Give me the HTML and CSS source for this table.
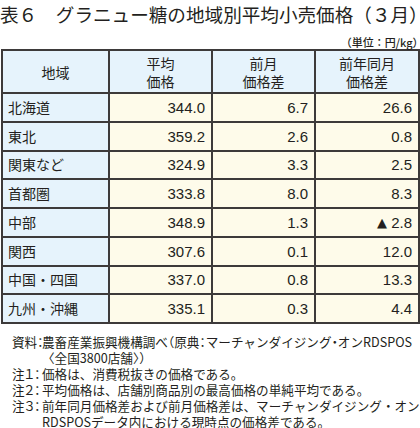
FILE: index.html
```html
<html><head><title>表６ グラニュー糖の地域別平均小売価格</title>
<link rel="stylesheet" href="styles.css">
</head>
<body>
<div class="sheet">
  <h1 class="title">表６　グラニュー糖の地域別平均小売価格（３月<span class="h">）</span></h1>
  <div class="unit"><span class="h">（</span>単位：円/kg<span class="h">）</span></div>
  <table class="prices">
    <colgroup>
      <col class="c-area"><col class="c-num"><col class="c-num"><col class="c-last">
    </colgroup>
    <thead>
      <tr>
        <th>地域</th>
        <th>平均<br>価格</th>
        <th>前月<br>価格差</th>
        <th>前年同月<br>価格差</th>
      </tr>
    </thead>
    <tbody>
      <tr><td class="area">北海道</td><td>344.0</td><td>6.7</td><td>26.6</td></tr>
      <tr><td class="area">東北</td><td>359.2</td><td>2.6</td><td>0.8</td></tr>
      <tr><td class="area">関東など</td><td>324.9</td><td>3.3</td><td>2.5</td></tr>
      <tr><td class="area">首都圏</td><td>333.8</td><td>8.0</td><td>8.3</td></tr>
      <tr><td class="area">中部</td><td>348.9</td><td>1.3</td><td><span class="minus">▲</span> 2.8</td></tr>
      <tr><td class="area">関西</td><td>307.6</td><td>0.1</td><td>12.0</td></tr>
      <tr><td class="area">中国・四国</td><td>337.0</td><td>0.8</td><td>13.3</td></tr>
      <tr><td class="area">九州・沖縄</td><td>335.1</td><td>0.3</td><td>4.4</td></tr>
    </tbody>
  </table>
  <div class="notes">
    <div class="note">
      <span class="label">資料：</span>
      <span class="body">農畜産業振興機構調べ<span class="h">（</span>原典<span class="h">：</span>マーチャンダイジング<span class="h">・</span>オンRDSPOS<br>〈全国3800店舗〉）</span>
    </div>
    <div class="note">
      <span class="label">注１：</span>
      <span class="body">価格は、消費税抜きの価格である。</span>
    </div>
    <div class="note">
      <span class="label">注２：</span>
      <span class="body">平均価格は、店舗別商品別の最高価格の単純平均である。</span>
    </div>
    <div class="note">
      <span class="label">注３：</span>
      <span class="body">前年同月価格差および前月価格差は、マーチャンダイジング・オン<br>RDSPOSデータ内における現時点の価格差である。</span>
    </div>
  </div>
</div>
</body></html>
```

FILE: styles.css
```css
body {
  margin: 0;
  padding: 0;
  background: #fff;
  color: #231f20;
  font-family: 'Noto Sans CJK JP', sans-serif;
}
.sheet {
  width: 420px;
}
.title {
  margin: 3px 0 0 0;
  font-size: 18.6px;
  font-weight: 400;
  line-height: 22px;
  white-space: nowrap;
}
.unit {
  margin-top: 11px;
  padding-right: 2px;
  text-align: right;
  font-size: 11px;
  font-weight: 500;
  line-height: 12px;
  height: 12px;
}
.prices {
  margin-top: 1px;
  margin-left: 1px;
  border-collapse: collapse;
  table-layout: fixed;
  width: 417px;
}
.c-area { width: 107px; }
.c-num { width: 103px; }
.c-last { width: 104px; }
.prices th,
.prices td {
  border: 2px solid #3d3a3a;
  padding: 0 6px;
}
.prices thead tr {
  height: 43px;
}
.prices tbody tr {
  height: 28.75px;
}
.prices th {
  background: #e6f3fc;
  font-weight: 400;
  font-size: 14px;
  line-height: 18px;
  text-align: center;
}
.prices td {
  background: #fefbea;
  text-align: right;
  font-family: 'Liberation Sans', Arial, sans-serif;
  font-size: 15px;
  line-height: 17px;
}
.prices td.area {
  background: #e6f3fc;
  text-align: left;
  font-family: 'Noto Sans CJK JP', sans-serif;
  font-size: 14px;
  padding-left: 5px;
}
.minus {
  font-family: 'DejaVu Sans', sans-serif;
  font-size: 13px;
  vertical-align: 1px;
}
.notes {
  margin-top: 10px;
  padding-left: 12px;
  font-size: 12.6px;
  line-height: 16px;
}
.note {
  display: flex;
  white-space: nowrap;
}
.label {
  width: 30px;
  flex: none;
  font-feature-settings: "palt";
}
.h {
  font-feature-settings: "halt";
}
```
